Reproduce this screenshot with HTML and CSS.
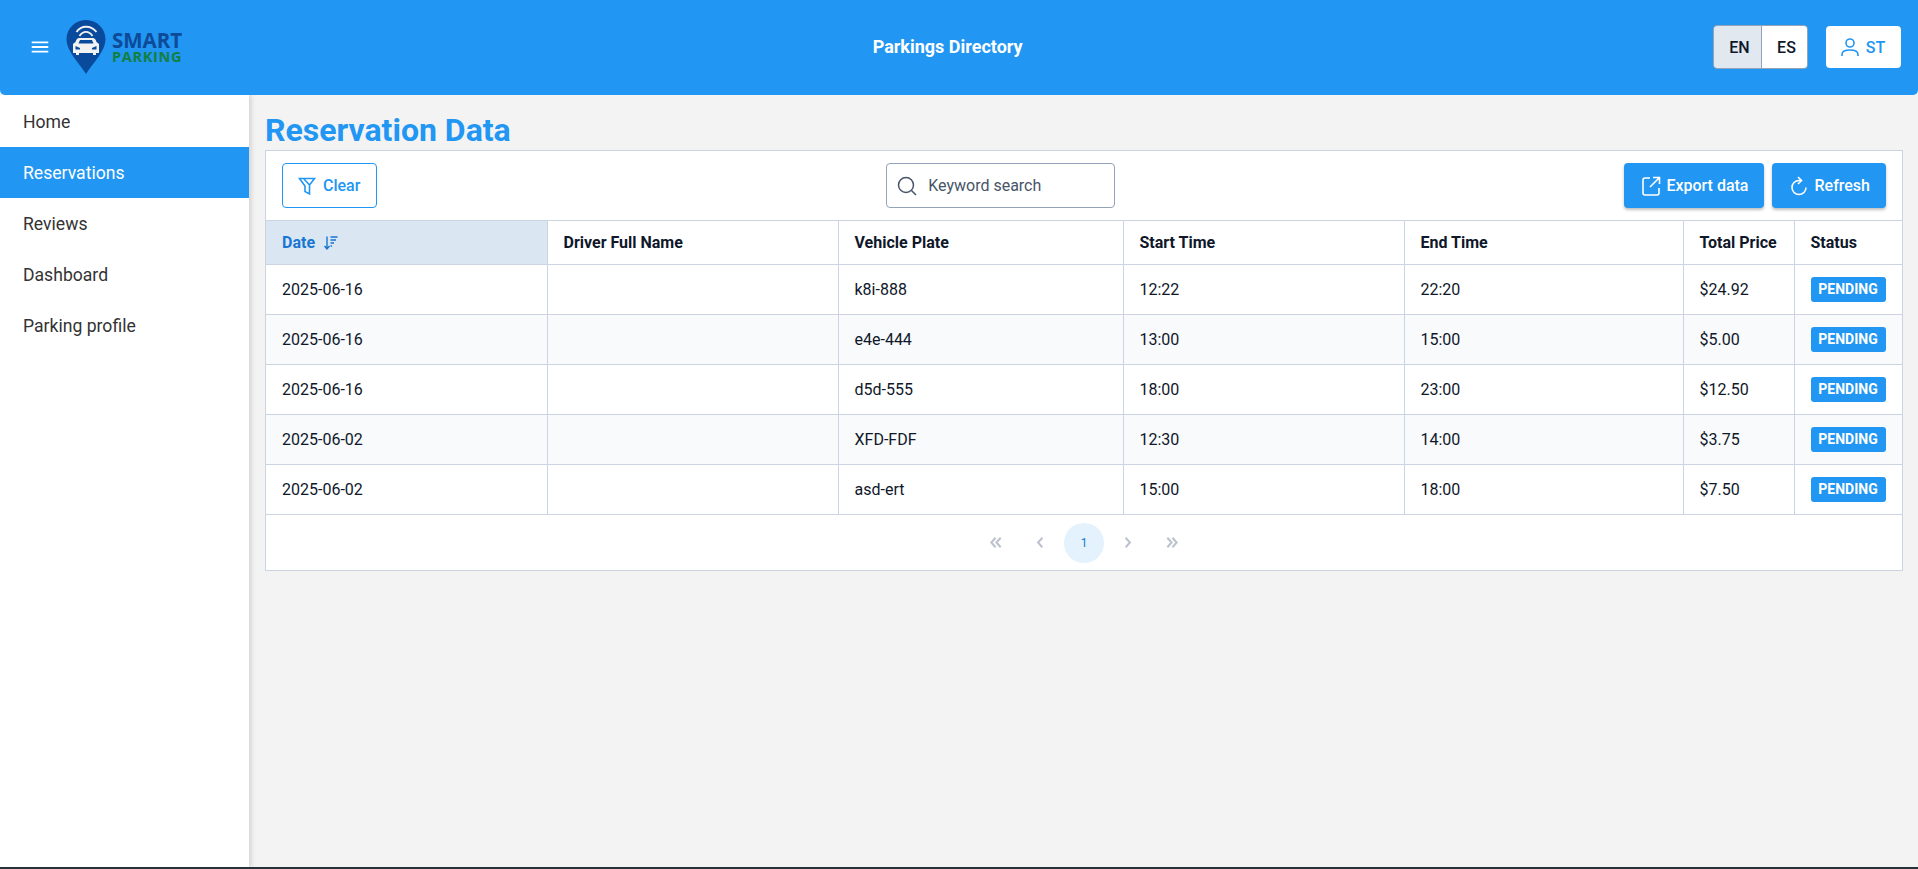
FILE: index.html
```html
<!DOCTYPE html>
<html lang="en">
<head>
    <meta charset="UTF-8">
    <meta name="viewport" content="width=device-width, initial-scale=1.0">
    <title>Parkings Directory</title>
    <link rel="stylesheet" href="styles.css">
</head>
<body>
    <header class="topbar">
        <div class="topbar-left">
            <svg class="menu-icon" viewBox="0 0 24 24"><path d="M3 6h18v2H3zM3 11h18v2H3zM3 16h18v2H3z"/></svg>
            <div class="logo">
                <svg class="logo-pin" viewBox="0 0 40 54">
                    <path class="pin" d="M20 0C9 0 .5 8.500 .5 19.500C.5 31 13 43 20 54C27 43 39.500 31 39.500 19.500C39.500 8.500 31 0 20 0Z"/>
                    <path class="waves" d="M10.500 12C15 5 25 5 30.500 12M13.500 16C17 10.500 23 10.500 26.500 16"/>
                    <path class="car" fill-rule="evenodd" d="M13 18H27C28.500 18 29.500 19 30.500 22L33 24V33H30V35H27V33H13V35H10V33H7V24L9.500 22C10.500 19 11.500 18 13 18ZM12.500 23.500H27.500L26 20H14ZM9.500 26L14 28V29.500H9.500ZM30.500 26L26 28V29.500H30.500Z"/>
                </svg>
                <div class="logo-text">
                    <span class="logo-smart">SMART</span>
                    <span class="logo-parking">PARKING</span>
                </div>
            </div>
        </div>
        <div class="topbar-title">Parkings Directory</div>
        <div class="topbar-right">
            <div class="lang-group">
                <button class="lang-btn lang-active">EN</button>
                <button class="lang-btn">ES</button>
            </div>
            <button class="user-btn">
                <svg class="icon" viewBox="0 0 24 24"><path d="M12 4a4 4 0 1 1 0 8a4 4 0 0 1 0-8ZM4 21v-1.500C4 16.500 7.500 15 12 15s8 1.500 8 4.500V21"/></svg>
                ST
            </button>
        </div>
    </header>

    <div class="layout">
        <nav class="sidebar">
            <a class="nav-item">Home</a>
            <a class="nav-item nav-active">Reservations</a>
            <a class="nav-item">Reviews</a>
            <a class="nav-item">Dashboard</a>
            <a class="nav-item">Parking profile</a>
        </nav>

        <main class="content">
            <h1 class="page-title">Reservation Data</h1>
            <div class="card">
                <div class="toolbar">
                    <button class="btn btn-outline">
                        <svg class="icon" viewBox="0 0 24 24"><path d="M4.500 4.500H19.500L14.500 11V20L10 17.500V12L4.500 4.500ZM8.500 4.500L14.500 11"/></svg>
                        Clear
                    </button>
                    <div class="search">
                        <svg class="search-icon" viewBox="0 0 24 24"><circle cx="11" cy="11" r="7.500"/><path d="M16.500 16.500L21 21"/></svg>
                        <span>Keyword search</span>
                    </div>
                    <div class="toolbar-end">
                        <button class="btn btn-solid">
                            <svg class="icon" viewBox="0 0 24 24"><path d="M11 4H6a2 2 0 0 0-2 2V19a2 2 0 0 0 2 2H18a2 2 0 0 0 2-2V14M14 3.500H20.500V10M20.500 3.500L11 13"/></svg>
                            Export data
                        </button>
                        <button class="btn btn-solid">
                            <svg class="icon" viewBox="0 0 24 24"><path d="M19 13.500A7 7 0 1 1 12 6.500H14.500M11 3L14.500 6.500L11 10"/></svg>
                            Refresh
                        </button>
                    </div>
                </div>

                <table class="data-table">
                    <colgroup>
                        <col class="col-date">
                        <col class="col-driver">
                        <col class="col-plate">
                        <col class="col-start">
                        <col class="col-end">
                        <col class="col-price">
                        <col class="col-status">
                    </colgroup>
                    <thead>
                        <tr>
                            <th class="sorted">
                                <span class="sort-label">Date
                                    <svg class="sort-icon" viewBox="0 0 16 16"><path d="M4 2V14M1.500 11.500L4 14.500L6.500 11.500M7.500 2.500H14.500M7.500 5.500H13M7.500 8.500H11M7.500 11.500H9"/></svg>
                                </span>
                            </th>
                            <th>Driver Full Name</th>
                            <th>Vehicle Plate</th>
                            <th>Start Time</th>
                            <th>End Time</th>
                            <th>Total Price</th>
                            <th>Status</th>
                        </tr>
                    </thead>
                    <tbody>
                        <tr>
                            <td>2025-06-16</td><td></td><td>k8i-888</td><td>12:22</td><td>22:20</td><td>$24.92</td>
                            <td><span class="badge">PENDING</span></td>
                        </tr>
                        <tr class="row-alt">
                            <td>2025-06-16</td><td></td><td>e4e-444</td><td>13:00</td><td>15:00</td><td>$5.00</td>
                            <td><span class="badge">PENDING</span></td>
                        </tr>
                        <tr>
                            <td>2025-06-16</td><td></td><td>d5d-555</td><td>18:00</td><td>23:00</td><td>$12.50</td>
                            <td><span class="badge">PENDING</span></td>
                        </tr>
                        <tr class="row-alt">
                            <td>2025-06-02</td><td></td><td>XFD-FDF</td><td>12:30</td><td>14:00</td><td>$3.75</td>
                            <td><span class="badge">PENDING</span></td>
                        </tr>
                        <tr>
                            <td>2025-06-02</td><td></td><td>asd-ert</td><td>15:00</td><td>18:00</td><td>$7.50</td>
                            <td><span class="badge">PENDING</span></td>
                        </tr>
                    </tbody>
                </table>

                <div class="pager">
                    <svg class="pager-icon" viewBox="0 0 16 16"><path d="M7.500 3L3 8L7.500 13M13 3L8.500 8L13 13"/></svg>
                    <svg class="pager-icon" viewBox="0 0 16 16"><path d="M10.500 3L6 8L10.500 13"/></svg>
                    <span class="page-current">1</span>
                    <svg class="pager-icon" viewBox="0 0 16 16"><path d="M5.500 3L10 8L5.500 13"/></svg>
                    <svg class="pager-icon" viewBox="0 0 16 16"><path d="M3 3L7.500 8L3 13M8.500 3L13 8L8.500 13"/></svg>
                </div>
            </div>
        </main>
    </div>
</body>
</html>
```

FILE: styles.css
```css
* {
    box-sizing: border-box;
}
html, body {
    height: 100%;
}
body {
    margin: 0;
    display: flex;
    flex-direction: column;
    overflow: hidden;
    background: #f3f3f3;
    border-bottom: 2px solid #263238;
    font-family: Roboto, "Liberation Sans", sans-serif;
    font-size: 16px;
    color: #0f172a;
}
button {
    font-family: inherit;
    cursor: pointer;
}
.icon {
    width: 24px;
    height: 24px;
    fill: none;
    stroke: currentColor;
    stroke-width: 1.6;
    flex: none;
}

/* top bar */
.topbar {
    height: 95px;
    flex: none;
    display: flex;
    justify-content: space-between;
    align-items: center;
    padding: 0 17px 1px 28px;
    background: #2196f3;
    border-radius: 0 0 5px 5px;
    position: relative;
    z-index: 2;
}
.topbar-left {
    display: flex;
    align-items: center;
    gap: 14px;
}
.menu-icon {
    width: 24px;
    height: 24px;
    fill: #fff;
    transform: scale(0.92);
}
.logo {
    display: flex;
    align-items: flex-start;
    gap: 6px;
    height: 54px;
}
.logo-pin {
    width: 40px;
    height: 54px;
}
.pin {
    fill: #0a4a9c;
}
.waves {
    fill: none;
    stroke: #f2f2f2;
    stroke-width: 1.800;
}
.car {
    fill: #f2f2f2;
}
.logo-text {
    display: flex;
    flex-direction: column;
    margin-top: 10px;
    font-family: "Open Sans", sans-serif;
    line-height: 1;
}
.logo-smart {
    font-size: 20.500px;
    height: 20px;
    font-weight: 700;
    color: #0d4a97;
}
.logo-parking {
    font-size: 14.500px;
    font-weight: 700;
    letter-spacing: 0.700px;
    color: #13803f;
}
.topbar-title {
    margin-bottom: 2px;
    font-size: 18px;
    font-weight: 700;
    color: #fff;
}
.topbar-right {
    display: flex;
    align-items: center;
    gap: 18px;
}
.lang-group {
    display: flex;
    width: 95px;
    height: 44px;
    border: 1px solid #94a3b8;
    border-radius: 4px;
    overflow: hidden;
}
.lang-btn {
    width: 45px;
    padding: 0 0 0 4px;
    border: 0;
    background: #fff;
    font-size: 16px;
    font-weight: 500;
    color: #0f172a;
}
.lang-btn:first-child {
    width: 48px;
    border-right: 1px solid #94a3b8;
}
.lang-active {
    background: #e2e8f0;
}
.user-btn {
    width: 75px;
    height: 42px;
    display: flex;
    align-items: center;
    justify-content: center;
    gap: 4px;
    padding: 0 4px 0 0;
    border: 0;
    border-radius: 4px;
    background: #fff;
    color: #2196f3;
    font-size: 16px;
    font-weight: 500;
}

/* sidebar and content */
.layout {
    flex: 1;
    display: flex;
    min-height: 0;
}
.sidebar {
    width: 249px;
    flex: none;
    padding-top: 1px;
    background: #fff;
    box-shadow: 2px 0 5px rgba(0,0,0,0.15);
}
.nav-item {
    display: block;
    height: 51px;
    padding-left: 23px;
    line-height: 53px;
    font-size: 17.600px;
    color: #333;
}
.nav-active {
    background: #2196f3;
    color: #fff;
}
.content {
    flex: 1;
    min-width: 0;
    padding: 0 15px 0 16px;
}
.page-title {
    margin: 0;
    height: 55px;
    padding-top: 17px;
    font-size: 32px;
    line-height: 36px;
    font-weight: 700;
    color: #2196f3;
}
.card {
    background: #fff;
    border: 1px solid #cbd5e1;
}

/* toolbar */
.toolbar {
    height: 69px;
    display: flex;
    justify-content: space-between;
    align-items: center;
    padding: 0 16px;
}
.toolbar-end {
    display: flex;
    gap: 8px;
}
.btn {
    height: 45px;
    display: flex;
    align-items: center;
    gap: 3px;
    padding: 0 16px 0 15px;
    border-radius: 4px;
    font-size: 16px;
    font-weight: 500;
}
.btn-outline {
    width: 95px;
    gap: 4px;
    padding: 0 12px;
    background: #fff;
    border: 1px solid #2196f3;
    color: #2196f3;
}
.btn-solid {
    border: 0;
    background: #2196f3;
    color: #fff;
    box-shadow: 0 2px 3px rgba(0,0,0,0.25);
}
.search {
    width: 229px;
    height: 45px;
    display: flex;
    align-items: center;
    gap: 9px;
    padding-left: 8px;
    border: 1px solid #94a3b8;
    border-radius: 4px;
    color: #475569;
    font-size: 16px;
}
.search-icon {
    width: 24px;
    height: 24px;
    fill: none;
    stroke: #475569;
    stroke-width: 1.500;
}

/* table */
.data-table {
    width: 100%;
    table-layout: fixed;
    border-collapse: collapse;
}
.col-date { width: 281px; }
.col-driver { width: 291px; }
.col-plate { width: 285px; }
.col-start { width: 281px; }
.col-end { width: 279px; }
.col-price { width: 111px; }
.data-table th,
.data-table td {
    padding: 0 16px;
    border: 1px solid #cbd5e1;
    text-align: left;
    font-size: 16px;
}
.data-table th:first-child,
.data-table td:first-child {
    border-left: 0;
}
.data-table th:last-child,
.data-table td:last-child {
    border-right: 0;
}
.data-table th {
    height: 44px;
    font-weight: 700;
}
.data-table td {
    height: 50px;
    font-weight: 400;
}
.data-table th.sorted {
    background: #dae7f2;
    color: #1976d2;
}
.sort-label {
    display: flex;
    align-items: center;
    gap: 8px;
}
.sort-icon {
    width: 16px;
    height: 17px;
    fill: none;
    stroke: #1976d2;
    stroke-width: 1.400;
}
.row-alt td {
    background: #f8fafc;
}
.badge {
    display: inline-block;
    width: 75px;
    height: 25px;
    border-radius: 3px;
    background: #2196f3;
    color: #fff;
    font-size: 14px;
    font-weight: 700;
    line-height: 25px;
    text-align: center;
    vertical-align: middle;
}

/* pagination */
.pager {
    height: 55px;
    display: flex;
    align-items: center;
    justify-content: center;
    gap: 4px;
}
.pager-icon {
    width: 40px;
    height: 15px;
    fill: none;
    stroke: #bcc3cf;
    stroke-width: 2.200;
}
.page-current {
    width: 40px;
    height: 40px;
    border-radius: 50%;
    background: #e3f2fd;
    color: #1976d2;
    font-size: 12px;
    line-height: 40px;
    text-align: center;
}
```
